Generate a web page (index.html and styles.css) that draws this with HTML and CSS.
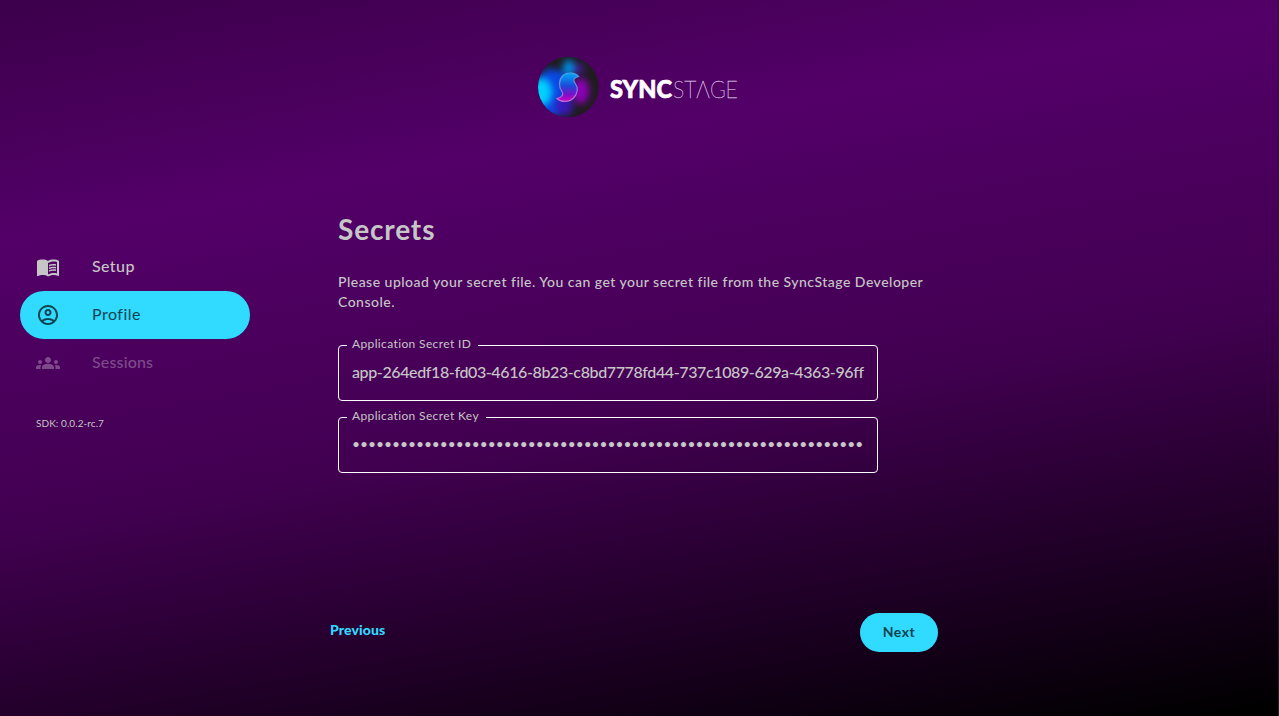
FILE: index.html
```html
<!DOCTYPE html>
<html lang="en">
<head>
<meta charset="utf-8">
<title>SyncStage</title>
<link rel="stylesheet" href="styles.css">
</head>
<body>
<div class="app">
  <header class="header">
    <svg class="logo" width="202" height="62" viewBox="0 0 202 62" role="img" aria-label="SyncStage">
      <defs>
        <clipPath id="disc"><circle cx="31.300" cy="31" r="30.300"/></clipPath>
        <filter id="soft" x="-60%" y="-60%" width="220%" height="220%" color-interpolation-filters="sRGB"><feGaussianBlur stdDeviation="3.500"/></filter>
        <linearGradient id="ess" x1="0" y1="0" x2="0" y2="1">
          <stop offset="0" stop-color="#00a8f8"/><stop offset=".45" stop-color="#1b49d8"/><stop offset=".75" stop-color="#7a10c8"/><stop offset="1" stop-color="#d400c4"/>
        </linearGradient>
        <linearGradient id="rim" x1="0" y1="0" x2="0" y2="1">
          <stop offset="0" stop-color="#3f9fe8"/><stop offset="1" stop-color="#c868d8"/>
        </linearGradient>
      </defs>
      <g clip-path="url(#disc)">
        <rect width="62" height="62" fill="#1f1c20"/>
        <g filter="url(#soft)">
          <ellipse cx="15" cy="37" rx="19" ry="24" fill="#0a48e4"/>
          <ellipse cx="27" cy="50" rx="9" ry="10" fill="#3a18b8"/>
          <ellipse cx="4" cy="36" rx="11" ry="14" fill="#00d0ff"/>
          <ellipse cx="32" cy="12" rx="6" ry="8" fill="#0090e8"/>
          <ellipse cx="42" cy="13" rx="5" ry="5" fill="#48189c"/>
          <ellipse cx="44" cy="35" rx="8" ry="13" fill="#8e00b8"/>
        </g>
        <path d="M41.500 20.500C38 16.500 30 16 26 19.500C21.500 24 21.500 31 25 35.500C27 38.500 25 41.500 20 42.500C24 46.500 32 46.500 36.500 42C41 37.500 41.500 31.500 38 27C35.500 24 37 21.500 41.500 20.500Z" fill="url(#ess)" stroke="url(#rim)" stroke-width="1.200"/>
      </g>
      <text class="logo-bold" x="73" y="42" textLength="62" lengthAdjust="spacingAndGlyphs">SYNC</text>
      <text class="logo-thin" x="136" y="42" textLength="65" lengthAdjust="spacingAndGlyphs">STΛGE</text>
    </svg>
  </header>
  <div class="body">
    <nav class="sidebar">
      <a class="item">
        <svg class="icon" viewBox="0 0 24 24"><path d="M17.500 4.500c-1.950 0-4.050.4-5.500 1.500-1.450-1.100-3.550-1.500-5.500-1.500S2.450 4.900 1 6v14.650c0 .65.730.45.75.450C3.100 20.450 5.050 20 6.500 20c1.950 0 4.050.4 5.500 1.500 1.350-.85 3.800-1.500 5.500-1.500 1.650 0 3.350.3 4.750 1.050.410.210.750-.190.750-.450V6c-1.490-1.120-3.630-1.500-5.500-1.500zm3.500 14c-1.100-.35-2.300-.5-3.500-.5-1.700 0-4.150.65-5.500 1.500V8c1.350-.85 3.800-1.500 5.500-1.500 1.200 0 2.400.15 3.500.5v11.500z"/><path d="M17.500 10.500c.88 0 1.730.09 2.500.26V9.240c-.79-.15-1.640-.24-2.500-.24-1.700 0-3.240.29-4.500.83v1.660c1.130-.64 2.700-.99 4.500-.99zM13 12.490v1.660c1.130-.64 2.700-.99 4.500-.99.88 0 1.730.09 2.500.26V11.900c-.79-.15-1.640-.24-2.500-.24-1.700 0-3.240.3-4.500.83zM17.500 14.330c-1.700 0-3.240.29-4.500.83v1.660c1.130-.64 2.700-.99 4.500-.99.88 0 1.730.09 2.500.26v-1.520c-.79-.16-1.640-.24-2.500-.24z"/></svg>
        <span class="setup">Setup</span>
      </a>
      <a class="item active">
        <svg class="icon" viewBox="0 0 24 24"><path d="M12 2C6.480 2 2 6.480 2 12s4.480 10 10 10 10-4.480 10-10S17.520 2 12 2zM7.350 18.500C8.660 17.560 10.260 17 12 17s3.340.56 4.650 1.500C15.340 19.440 13.740 20 12 20s-3.340-.56-4.650-1.500zm10.790-1.380C16.450 15.800 14.320 15 12 15s-4.450.8-6.140 2.120C4.700 15.730 4 13.950 4 12c0-4.420 3.580-8 8-8s8 3.580 8 8c0 1.950-.7 3.730-1.860 5.120z"/><path d="M12 6c-1.930 0-3.500 1.570-3.500 3.500S10.070 13 12 13s3.500-1.570 3.500-3.500S13.930 6 12 6zm0 5c-.83 0-1.500-.67-1.500-1.500S11.170 8 12 8s1.500.67 1.500 1.500S12.830 11 12 11z"/></svg>
        <span class="profile">Profile</span>
      </a>
      <a class="item disabled">
        <svg class="icon" viewBox="0 0 24 24"><path d="M12 12.750c1.630 0 3.070.39 4.240.9 1.080.48 1.760 1.560 1.760 2.730V18H6v-1.610c0-1.180.68-2.260 1.760-2.730 1.170-.52 2.610-.91 4.240-.91zM4 13c1.100 0 2-.9 2-2s-.9-2-2-2-2 .9-2 2 .9 2 2 2zm1.130 1.100c-.37-.06-.74-.1-1.130-.1-.99 0-1.930.21-2.780.58C.48 14.900 0 15.620 0 16.430V18h4.500v-1.610c0-.83.23-1.610.63-2.290zM20 13c1.100 0 2-.9 2-2s-.9-2-2-2-2 .9-2 2 .9 2 2 2zm4 3.430c0-.81-.48-1.530-1.220-1.850-.85-.37-1.790-.58-2.780-.58-.39 0-.76.04-1.130.1.400.68.630 1.460.630 2.290V18H24v-1.570zM12 6c1.660 0 3 1.340 3 3s-1.340 3-3 3-3-1.340-3-3 1.340-3 3-3z"/></svg>
        <span class="sessions">Sessions</span>
      </a>
      <p class="sdk">SDK: 0.0.2-rc.7</p>
    </nav>
    <main class="main">
      <section class="content">
        <h1 class="title">Secrets</h1>
        <p class="intro">Please upload your secret file. You can get your secret file from the SyncStage Developer<br>Console.</p>
        <fieldset class="field">
          <legend class="legend">Application Secret ID</legend>
          <div class="value">app-264edf18-fd03-4616-8b23-c8bd7778fd44-737c1089-629a-4363-96ff</div>
        </fieldset>
        <fieldset class="field">
          <legend class="legend">Application Secret Key</legend>
          <div class="value masked">••••••••••••••••••••••••••••••••••••••••••••••••••••••••••••••••</div>
        </fieldset>
      </section>
      <footer class="actions">
        <a class="previous">Previous</a>
        <a class="next">Next</a>
      </footer>
    </main>
  </div>
</div>
</body>
</html>
```
FILE: styles.css
```css
* { box-sizing: border-box; }
body {
  margin: 0;
  font-family: Lato, sans-serif;
  color: #c6c6c6;
}
.app {
  display: flex;
  flex-direction: column;
  height: 716px;
  overflow: hidden;
  border-right: 1px solid #241a28;
  background: linear-gradient(170deg, #3c004b 0%, #530068 25.500%, #420051 56%, #000 99%);
}
.header { display: flex; justify-content: center; padding-top: 56px; height: 207px; }
.logo { display: block; margin-left: -2px; overflow: visible; }
.logo-bold { font-weight: 900; font-size: 24.500px; fill: #fff; stroke: #fff; stroke-width: .7px; }
.logo-thin { font-weight: 100; font-size: 24.500px; fill: #d9c4e0; stroke: #d9c4e0; stroke-width: .35px; }
.body { display: flex; flex: 1; }
.sidebar { width: 330px; padding: 36px 80px 0 20px; }
.item {
  display: flex;
  align-items: center;
  height: 48px;
  padding: 0 16px;
  gap: 32px;
  border-radius: 24px;
  font-size: 16px;
  font-weight: 500;
  white-space: nowrap;
}
.item span { padding-bottom: 3px; }
.setup { letter-spacing: .4px; }
.profile { letter-spacing: .5px; font-weight: 400; }
.sessions { letter-spacing: .15px; }
.icon { width: 24px; height: 24px; fill: currentColor; flex: none; }
.active { background: #31dbff; color: #0f4350; }
.disabled { color: #7f4a8b; }
.sdk { margin: 28px 16px 0; font-size: 10px; line-height: 16px; letter-spacing: .07px; white-space: nowrap; }
.main { width: 608px; display: flex; flex-direction: column; }
.content { padding: 0 0 0 8px; flex: 1; }
.title { margin: 0; font-size: 28px; line-height: 44px; font-weight: 700; letter-spacing: .85px; }
.intro { margin: 21px 0 0; font-size: 14px; line-height: 20px; font-weight: 500; letter-spacing: .48px; white-space: nowrap; }
.field {
  width: 540px;
  min-width: 0;
  height: 65px;
  margin: 24px 0 0;
  padding: 0 13px;
  border: 1px solid #fff;
  border-radius: 4px;
}
.field + .field { margin-top: 7px; }
.legend {
  margin-left: -5px;
  padding: 0 7px 4px 5px;
  font-size: 12px;
  line-height: 15px;
  letter-spacing: .37px;
  white-space: nowrap;
}
.value { font-size: 16px; line-height: 23px; padding-top: 5px; font-weight: 500; letter-spacing: -.385px; white-space: nowrap; }
.masked { font-size: 13.800px; font-weight: 400; letter-spacing: -.015px; }
.actions { display: flex; justify-content: space-between; height: 103px; }
.previous { color: #31dbff; font-size: 14px; line-height: 34px; font-weight: 900; letter-spacing: .12px; }
.next {
  display: flex;
  align-items: center;
  justify-content: center;
  width: 78px;
  height: 39px;
  padding-bottom: 2px;
  border-radius: 20px;
  background: #31dbff;
  color: #0f4350;
  font-size: 14px;
  font-weight: 700;
  letter-spacing: .5px;
}
```
